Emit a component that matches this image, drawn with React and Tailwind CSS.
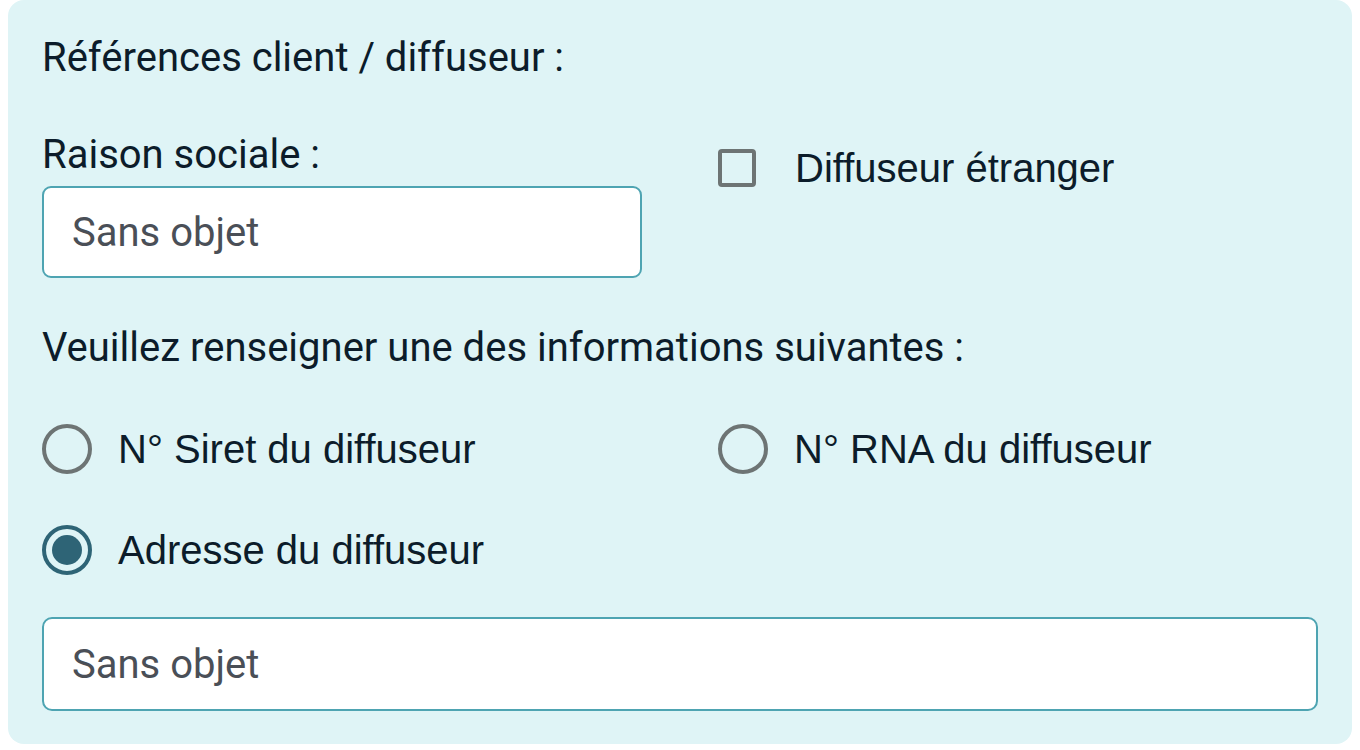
import { useState } from "react";

const roboto = { fontFamily: "Roboto, 'Liberation Sans', sans-serif" };

function Radio({ checked, label, onClick }) {
  return (
    <button type="button" onClick={onClick} className="flex h-[50px] items-center gap-[26px] text-left">
      <span
        className={`flex h-[50px] w-[50px] shrink-0 items-center justify-center rounded-full border-[4px] ${
          checked ? "border-[#2e6476]" : "border-[#6d7474]"
        }`}
      >
        {checked && <span className="h-[30px] w-[30px] rounded-full bg-[#2e6476]" />}
      </span>
      <span className="font-['Liberation_Sans',Arial,sans-serif] text-[40px] leading-[48px] text-[#0c1c2a]">{label}</span>
    </button>
  );
}

export default function App() {
  const [foreign, setForeign] = useState(false);
  const [choice, setChoice] = useState("adresse");

  return (
    <div className="min-h-screen bg-white px-[8px]">
      <div className="rounded-[16px] bg-[#dff4f6] px-[34px] pb-[33px] pt-[34px] text-[#0c1c2a]">
        <h2 className="font-['Roboto',sans-serif] text-[40px] leading-[48px]">Références client / diffuseur :</h2>

        <div className="mt-[49px] grid grid-cols-[600px_1fr] gap-x-[76px]">
          <div>
            <label className="block font-['Roboto',sans-serif] text-[40px] leading-[48px]">Raison sociale :</label>
            <input
              defaultValue="Sans objet"
              style={roboto}
              className="mt-[7px] h-[92px] w-full rounded-[9px] border-2 border-[#4ea4b2] bg-white px-[28px] text-[40px] text-[#4a4f57] outline-none"
            />
          </div>
          <div className="mt-[13px]">
            <button type="button" onClick={() => setForeign(!foreign)} className="flex h-[48px] items-center gap-[39px]">
              <span className="flex h-[38px] w-[38px] items-center justify-center rounded-[4px] border-[4px] border-[#6d7474]">
                {foreign && <span className="text-[26px] leading-none text-[#2e6476]">✓</span>}
              </span>
              <span className="font-['Liberation_Sans',Arial,sans-serif] text-[40px] leading-[48px]">Diffuseur étranger</span>
            </button>
          </div>
        </div>

        <p className="mt-[46px] font-['Roboto',sans-serif] text-[40px] leading-[48px]">
          Veuillez renseigner une des informations suivantes :
        </p>

        <div className="mt-[52px] grid grid-cols-[600px_1fr] gap-x-[76px]">
          <Radio checked={choice === "siret"} label="N° Siret du diffuseur" onClick={() => setChoice("siret")} />
          <Radio checked={choice === "rna"} label="N° RNA du diffuseur" onClick={() => setChoice("rna")} />
        </div>
        <div className="mt-[51px]">
          <Radio checked={choice === "adresse"} label="Adresse du diffuseur" onClick={() => setChoice("adresse")} />
        </div>

        <input
          defaultValue="Sans objet"
          style={roboto}
          className="mt-[42px] block h-[94px] w-full rounded-[10px] border-2 border-[#4ea4b2] bg-white px-[28px] text-[40px] text-[#4a4f57] outline-none"
        />
      </div>
    </div>
  );
}
